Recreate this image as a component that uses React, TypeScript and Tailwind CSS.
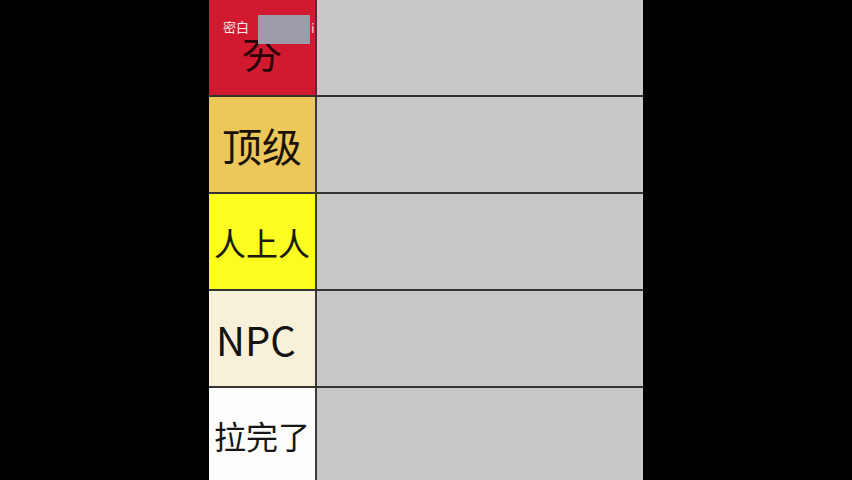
type Tier = { label: string; bg: string; text: string; size: string };

const tiers: Tier[] = [
  { label: "夯", bg: "bg-[#d11a2f]", text: "text-[#2a0508]", size: "text-[40px]" },
  { label: "顶级", bg: "bg-[#ecc75a]", text: "text-[#1a1208]", size: "text-[40px]" },
  { label: "人上人", bg: "bg-[#fcfc20]", text: "text-[#1a1a10]", size: "text-[32px]" },
  { label: "NPC", bg: "bg-[#f8f1d9]", text: "text-[#141414]", size: "text-[40px]" },
  { label: "拉完了", bg: "bg-[#fdfdfc]", text: "text-[#161616]", size: "text-[32px]" },
];

export default function App() {
  return (
    <div
      className="w-[852px] h-[480px] overflow-hidden bg-black flex justify-center"
      style={{ fontFamily: '"Noto Sans CJK SC", "Noto Sans", sans-serif' }}
    >
      <div className="relative w-[434px] flex flex-col">
        {tiers.map((t) => (
          <div key={t.label} className="flex h-[97px] shrink-0 border-b-2 border-[#343434]">
            <div
              className={`w-[108px] shrink-0 flex items-center justify-center border-r-2 border-[#3a3a3a] ${t.bg} ${t.text} ${t.size} leading-none`}
            >
              <span className={t.label === "夯" ? "mt-[6px]" : t.label === "NPC" ? "-ml-[12px]" : t.label === "拉完了" ? "-mt-[2px]" : ""}>
                {t.label}
              </span>
            </div>
            <div className="flex-1 bg-[#c8c8c7]" />
          </div>
        ))}

        {/* watermark over the first tier */}
        <div className="absolute left-[14px] top-[20px] text-[13px] leading-none text-white/90">密白</div>
        <div className="absolute left-[49px] top-[15px] w-[52px] h-[29px] bg-[#9b9ba9]" />
        <div className="absolute left-[102px] top-[21px] text-[13px] leading-none text-white/80 w-[4px] overflow-hidden">
          i
        </div>
      </div>
    </div>
  );
}
